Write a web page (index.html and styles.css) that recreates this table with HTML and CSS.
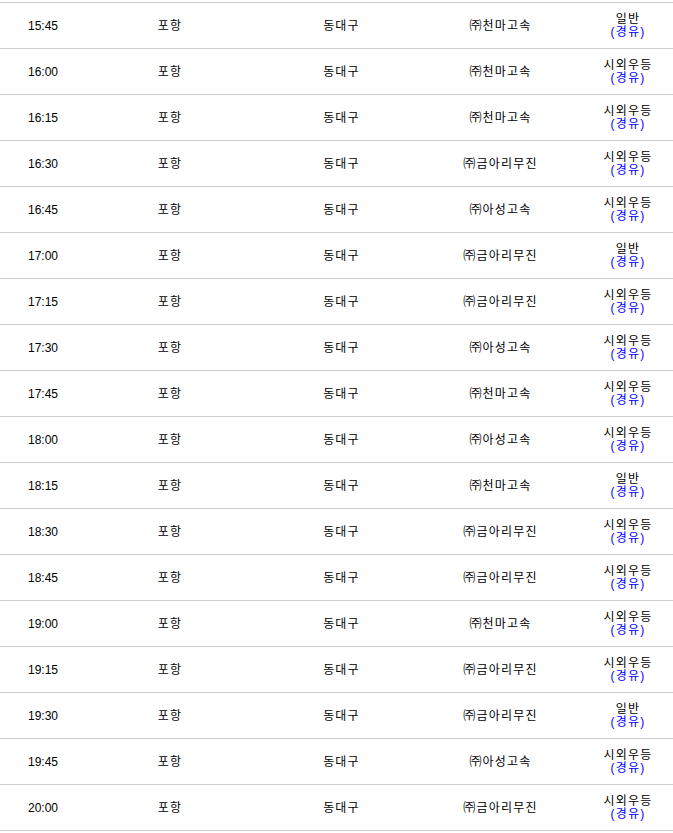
FILE: index.html
```html
<!DOCTYPE html>
<html lang="ko">
<head>
<meta charset="utf-8">
<link rel="stylesheet" href="styles.css">
</head>
<body>
<div class="wrap">
  <div class="table">
    <div class="row"><div class="c time">15:45</div><div class="c">포항</div><div class="c">동대구</div><div class="c">㈜천마고속</div><div class="c type"><span>일반</span><span class="via">(경유)</span></div></div>
    <div class="row"><div class="c time">16:00</div><div class="c">포항</div><div class="c">동대구</div><div class="c">㈜천마고속</div><div class="c type"><span>시외우등</span><span class="via">(경유)</span></div></div>
    <div class="row"><div class="c time">16:15</div><div class="c">포항</div><div class="c">동대구</div><div class="c">㈜천마고속</div><div class="c type"><span>시외우등</span><span class="via">(경유)</span></div></div>
    <div class="row"><div class="c time">16:30</div><div class="c">포항</div><div class="c">동대구</div><div class="c">㈜금아리무진</div><div class="c type"><span>시외우등</span><span class="via">(경유)</span></div></div>
    <div class="row"><div class="c time">16:45</div><div class="c">포항</div><div class="c">동대구</div><div class="c">㈜아성고속</div><div class="c type"><span>시외우등</span><span class="via">(경유)</span></div></div>
    <div class="row"><div class="c time">17:00</div><div class="c">포항</div><div class="c">동대구</div><div class="c">㈜금아리무진</div><div class="c type"><span>일반</span><span class="via">(경유)</span></div></div>
    <div class="row"><div class="c time">17:15</div><div class="c">포항</div><div class="c">동대구</div><div class="c">㈜금아리무진</div><div class="c type"><span>시외우등</span><span class="via">(경유)</span></div></div>
    <div class="row"><div class="c time">17:30</div><div class="c">포항</div><div class="c">동대구</div><div class="c">㈜아성고속</div><div class="c type"><span>시외우등</span><span class="via">(경유)</span></div></div>
    <div class="row"><div class="c time">17:45</div><div class="c">포항</div><div class="c">동대구</div><div class="c">㈜천마고속</div><div class="c type"><span>시외우등</span><span class="via">(경유)</span></div></div>
    <div class="row"><div class="c time">18:00</div><div class="c">포항</div><div class="c">동대구</div><div class="c">㈜아성고속</div><div class="c type"><span>시외우등</span><span class="via">(경유)</span></div></div>
    <div class="row"><div class="c time">18:15</div><div class="c">포항</div><div class="c">동대구</div><div class="c">㈜천마고속</div><div class="c type"><span>일반</span><span class="via">(경유)</span></div></div>
    <div class="row"><div class="c time">18:30</div><div class="c">포항</div><div class="c">동대구</div><div class="c">㈜금아리무진</div><div class="c type"><span>시외우등</span><span class="via">(경유)</span></div></div>
    <div class="row"><div class="c time">18:45</div><div class="c">포항</div><div class="c">동대구</div><div class="c">㈜금아리무진</div><div class="c type"><span>시외우등</span><span class="via">(경유)</span></div></div>
    <div class="row"><div class="c time">19:00</div><div class="c">포항</div><div class="c">동대구</div><div class="c">㈜천마고속</div><div class="c type"><span>시외우등</span><span class="via">(경유)</span></div></div>
    <div class="row"><div class="c time">19:15</div><div class="c">포항</div><div class="c">동대구</div><div class="c">㈜금아리무진</div><div class="c type"><span>시외우등</span><span class="via">(경유)</span></div></div>
    <div class="row"><div class="c time">19:30</div><div class="c">포항</div><div class="c">동대구</div><div class="c">㈜금아리무진</div><div class="c type"><span>일반</span><span class="via">(경유)</span></div></div>
    <div class="row"><div class="c time">19:45</div><div class="c">포항</div><div class="c">동대구</div><div class="c">㈜아성고속</div><div class="c type"><span>시외우등</span><span class="via">(경유)</span></div></div>
    <div class="row"><div class="c time">20:00</div><div class="c">포항</div><div class="c">동대구</div><div class="c">㈜금아리무진</div><div class="c type"><span>시외우등</span><span class="via">(경유)</span></div></div>
  </div>
</div>
</body>
</html>
```

FILE: styles.css
```css
html, body {
  margin: 0;
  padding: 0;
  background: #fff;
}
body {
  font-family: "Liberation Sans", "Noto Sans CJK KR", sans-serif;
  font-size: 12px;
  color: #000;
}
.wrap {
  width: 673px;
  overflow: hidden;
  padding-top: 2px;
}
.table {
  width: 684px;
  border-bottom: 1px solid #cfcfcf;
}
.row {
  display: grid;
  grid-template-columns: 86px 167px 176px 142px 113px;
  height: 45px;
  border-top: 1px solid #cfcfcf;
}
.c {
  display: flex;
  align-items: center;
  justify-content: center;
  text-align: center;
  line-height: 14px;
  letter-spacing: 1.2px;
  padding-left: 1px;
}
.time {
  letter-spacing: 0;
  padding-left: 0;
}
.type {
  flex-direction: column;
  line-height: 13px;
  padding-top: 1px;
}
.via {
  color: #0000ff;
}
```
